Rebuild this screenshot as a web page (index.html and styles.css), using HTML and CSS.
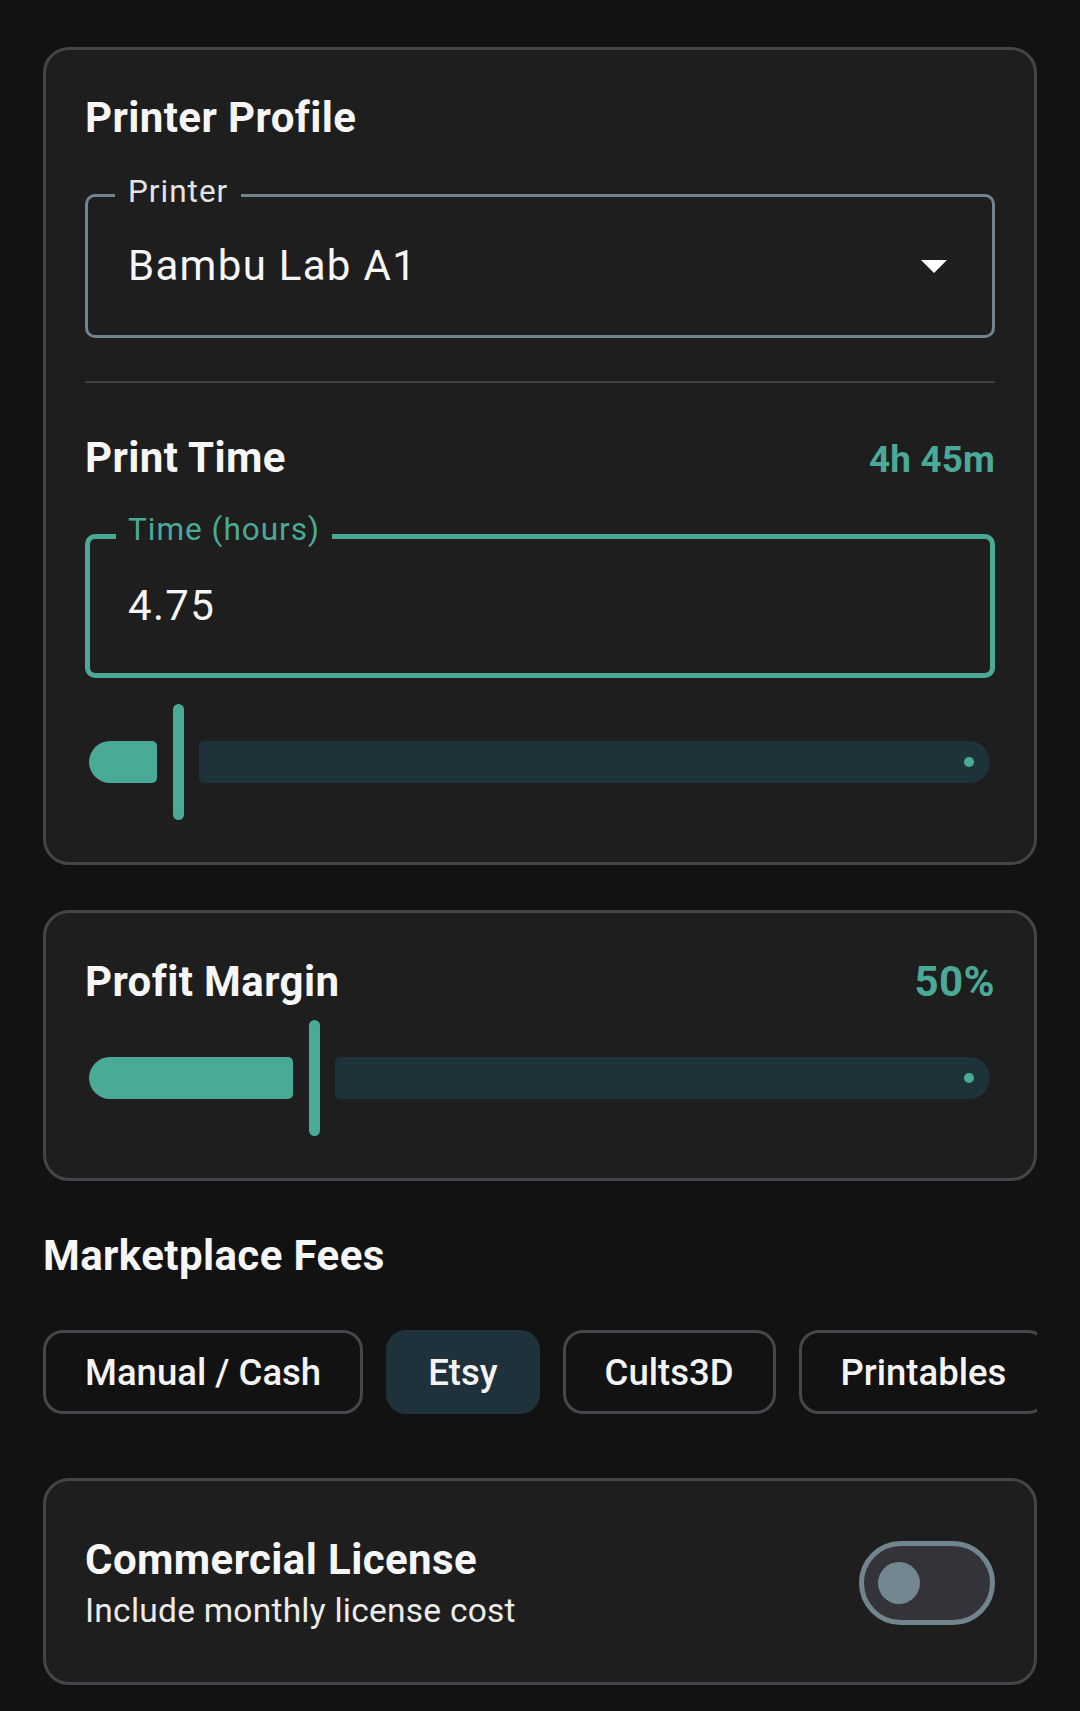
FILE: index.html
```html
<!DOCTYPE html>
<html>
  <head>
    <title>Print Cost Calculator</title>
    <link rel="stylesheet" href="styles.css">
  </head>
  <body>
    <div class="screen">
      <section class="card">
        <h2 class="title">Printer Profile</h2>
        <div class="field">
          <span class="field-label">Printer</span>
          <span class="field-value">Bambu Lab A1</span>
          <svg class="arrow" width="26" height="13" viewBox="0 0 26 13">
            <polygon points="0,0 26,0 13,13" fill="#ffffff"/>
          </svg>
        </div>
        <hr class="divider">
        <div class="title-row">
          <h2 class="title">Print Time</h2>
          <span class="value">4h 45m</span>
        </div>
        <div class="field field-focused">
          <span class="field-label">Time (hours)</span>
          <span class="field-value">4.75</span>
        </div>
        <div class="slider slider-time">
          <div class="track-active" style="width: 68px"></div>
          <div class="thumb"></div>
          <div class="track-inactive"><span class="stop"></span></div>
        </div>
      </section>

      <section class="card card-margin">
        <div class="title-row title-row-first">
          <h2 class="title">Profit Margin</h2>
          <span class="value value-large">50%</span>
        </div>
        <div class="slider slider-margin">
          <div class="track-active" style="width: 204px"></div>
          <div class="thumb"></div>
          <div class="track-inactive"><span class="stop"></span></div>
        </div>
      </section>

      <h2 class="title section-title">Marketplace Fees</h2>
      <div class="chips">
        <span class="chip">Manual / Cash</span>
        <span class="chip chip-selected">Etsy</span>
        <span class="chip">Cults3D</span>
        <span class="chip">Printables</span>
      </div>

      <section class="card card-license">
        <div class="license-row">
          <div class="license-text">
            <h2 class="title">Commercial License</h2>
            <p class="subtitle">Include monthly license cost</p>
          </div>
          <div class="switch">
            <span class="switch-thumb"></span>
          </div>
        </div>
      </section>
    </div>
  </body>
</html>
```

FILE: styles.css
```css
body {
    margin: 0;
    background-color: #121212;
    font-family: Roboto, "Noto Sans", sans-serif;
    color: #f4f4f4;
}
.screen {
    padding: 47px 43px 0 43px;
}
.card {
    background-color: #1e1e1e;
    border: 3px solid #45444a;
    border-radius: 26px;
    padding: 44px 39px 42px 39px;
}
.card-margin {
    margin-top: 45px;
}
.title {
    margin: 0;
    font-size: 42px;
    line-height: 48px;
    font-weight: 700;
    letter-spacing: 0.4px;
    color: #f6f6f6;
}
.title-row {
    display: flex;
    justify-content: space-between;
    align-items: baseline;
    margin-top: 51px;
}
.title-row-first {
    margin-top: 0;
}
.value {
    font-size: 36.75px;
    font-weight: 700;
    color: #4aaa97;
    letter-spacing: 0.2px;
}
.value-large {
    font-size: 42px;
    letter-spacing: 0.4px;
}

/* outlined text fields */
.field {
    position: relative;
    box-sizing: border-box;
    height: 144px;
    margin-top: 52px;
    border: 3px solid #70858f;
    border-radius: 10px;
    padding: 0 45px 0 40px;
    display: flex;
    align-items: center;
    justify-content: space-between;
}
.field-focused {
    border: 5px solid #4aaa97;
    padding-left: 38px;
}
.field-label {
    position: absolute;
    top: -23px;
    left: 27px;
    padding: 0 13px 0 13px;
    background-color: #1e1e1e;
    font-size: 31.5px;
    line-height: 36px;
    letter-spacing: 1px;
    color: #e4e4e4;
}
.field-focused .field-label {
    top: -27px;
    left: 26px;
    padding: 0 12px 0 12px;
    color: #4aaa97;
}
.field-value {
    font-size: 42px;
    line-height: 48px;
    letter-spacing: 1.3px;
    color: #f6f6f6;
}
.arrow {
    display: block;
}
.divider {
    margin: 43px 0 0 0;
    height: 2px;
    border: none;
    background-color: #3f3e44;
}

/* sliders */
.slider {
    display: flex;
    align-items: center;
    height: 116px;
    padding: 0 5px 0 4px;
}
.slider-time {
    margin-top: 26px;
}
.slider-margin {
    margin-top: 14px;
}
.track-active {
    flex-shrink: 0;
    height: 42px;
    background-color: #4aaa97;
    border-radius: 21px 5px 5px 21px;
}
.thumb {
    flex-shrink: 0;
    width: 11px;
    height: 116px;
    margin: 0 15px 0 16px;
    background-color: #4aaa97;
    border-radius: 6px;
}
.track-inactive {
    flex: 1;
    height: 42px;
    background-color: #1e323a;
    border-radius: 5px 21px 21px 5px;
    display: flex;
    align-items: center;
    justify-content: flex-end;
    padding-right: 16px;
}
.stop {
    width: 10px;
    height: 10px;
    border-radius: 50%;
    background-color: #4aaa97;
}

/* marketplace chips */
.section-title {
    margin-top: 51px;
}
.chips {
    display: flex;
    gap: 23px;
    margin-top: 50px;
    overflow: hidden;
    white-space: nowrap;
}
.chip {
    flex-shrink: 0;
    box-sizing: border-box;
    height: 84px;
    padding: 0 39px;
    border: 3px solid #47464c;
    border-radius: 20px;
    display: flex;
    align-items: center;
    font-size: 36.5px;
    font-weight: 500;
    letter-spacing: 0;
    color: #f4f4f4;
}
.chip-selected {
    border-color: transparent;
    background-color: #1f323b;
}

/* license card */
.card-license {
    margin-top: 64px;
    padding: 51px 39px 48px 39px;
}
.license-row {
    display: flex;
    align-items: center;
    justify-content: space-between;
}
.license-text .title {
    line-height: 56px;
}
.subtitle {
    margin: 0;
    font-size: 33.5px;
    line-height: 46px;
    letter-spacing: 0.25px;
    color: #ebebeb;
}
.switch {
    box-sizing: border-box;
    width: 136px;
    height: 84px;
    border: 5px solid #72858e;
    border-radius: 42px;
    background-color: #34333a;
    display: flex;
    align-items: center;
    padding-left: 14px;
}
.switch-thumb {
    width: 42px;
    height: 42px;
    border-radius: 50%;
    background-color: #72878f;
}
```
